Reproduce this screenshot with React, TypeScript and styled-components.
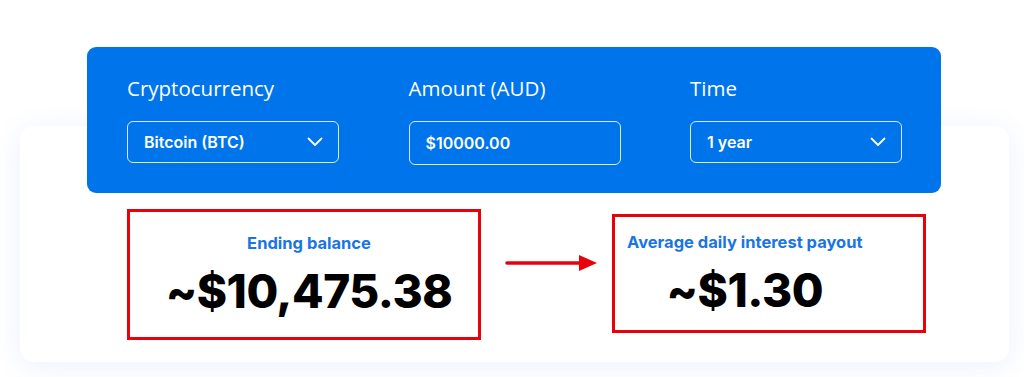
import React from 'react';
import styled, { createGlobalStyle } from 'styled-components';

const GlobalStyle = createGlobalStyle`
  html, body {
    margin: 0;
    padding: 0;
    background: #ffffff;
  }
  body {
    font-family: 'Inter', 'Open Sans', sans-serif;
  }
`;

interface Field {
  label: string;
  value: string;
  select: boolean;
}

const fields: Field[] = [
  { label: 'Cryptocurrency', value: 'Bitcoin (BTC)', select: true },
  { label: 'Amount (AUD)', value: '$10000.00', select: false },
  { label: 'Time', value: '1 year', select: true },
];

const Chevron = () => (
  <svg width="16" height="10" viewBox="0 0 16 10" fill="none">
    <path
      d="M1.5 1.5L8 8L14.5 1.5"
      stroke="#ffffff"
      strokeWidth="1.8"
      strokeLinecap="round"
      strokeLinejoin="round"
    />
  </svg>
);

const Arrow = () => (
  <svg width="92" height="20" viewBox="0 0 92 20">
    <line x1="2" y1="10" x2="76" y2="10" stroke="#e8000b" strokeWidth="3.5" strokeLinecap="round" />
    <path d="M74 2L92 10L74 18Z" fill="#e8000b" />
  </svg>
);

const App: React.FC = () => {
  return (
    <>
      <GlobalStyle />
      <Page>
        <Panel>
          {fields.map((f) => (
            <Column key={f.label}>
              <Label>{f.label}</Label>
              <InputBox select={f.select}>
                <span>{f.value}</span>
                {f.select && <Chevron />}
              </InputBox>
            </Column>
          ))}
        </Panel>
        <Card>
          <ResultBox width={354} height={131} padLeft={10} padTop={21}>
            <ResultInner>
              <ResultLabel>Ending balance</ResultLabel>
              <ResultValue>~$10,475.38</ResultValue>
            </ResultInner>
          </ResultBox>
          <ArrowWrap>
            <Arrow />
          </ArrowWrap>
          <ResultBox width={314} height={119} padLeft={12} padTop={15} left>
            <ResultInner>
              <ResultLabel>Average daily interest payout</ResultLabel>
              <ResultValue>~$1.30</ResultValue>
            </ResultInner>
          </ResultBox>
        </Card>
      </Page>
    </>
  );
};

export default App;

const Page = styled.div`
  width: 1024px;
  height: 377px;
  box-sizing: border-box;
  padding: 47px 15px 0 20px;
  overflow: hidden;
`;

const Panel = styled.div`
  position: relative;
  z-index: 1;
  margin-left: 67px;
  width: 854px;
  height: 146px;
  box-sizing: border-box;
  padding: 28px 39px 0 40px;
  background: #0074ea;
  border-radius: 9px;
  display: grid;
  grid-template-columns: repeat(3, 212px);
  column-gap: 69.5px;
`;

const Column = styled.div`
  display: flex;
  flex-direction: column;
`;

const Label = styled.div`
  color: #ffffff;
  font-family: 'Open Sans', sans-serif;
  font-size: 20.5px;
  line-height: 26px;
  font-weight: 400;
  margin-bottom: 20px;
`;

const InputBox = styled.div<{ select: boolean }>`
  box-sizing: border-box;
  border: 1px solid rgba(255, 255, 255, 0.85);
  border-radius: 6px;
  padding: 0 15px 0 16px;
  display: flex;
  align-items: center;
  justify-content: space-between;
  color: #ffffff;
  font-family: 'Inter', sans-serif;
  font-weight: 600;
  font-size: 16px;
  height: ${({ select }) => (select ? '42px' : '44px')};
`;

const Card = styled.div`
  margin-top: -67px;
  width: 989px;
  height: 236px;
  box-sizing: border-box;
  padding: 83px 0 0 107px;
  background: #ffffff;
  border-radius: 14px;
  box-shadow: 0 4px 30px rgba(40, 100, 220, 0.09);
  display: flex;
  align-items: flex-start;
`;

const ResultBox = styled.div<{
  width: number;
  height: number;
  padLeft: number;
  padTop: number;
  left?: boolean;
}>`
  width: ${({ width }) => width}px;
  height: ${({ height }) => height}px;
  box-sizing: border-box;
  border: 3px solid #e8000b;
  display: flex;
  justify-content: ${({ left }) => (left ? 'flex-start' : 'center')};
  padding-left: ${({ padLeft }) => padLeft}px;
  padding-top: ${({ padTop }) => padTop}px;
  margin-top: ${({ left }) => (left ? '5px' : '0')};
`;

const ResultInner = styled.div`
  display: flex;
  flex-direction: column;
  align-items: center;
`;

const ResultLabel = styled.div`
  color: #1a74e2;
  font-family: 'Inter', sans-serif;
  font-weight: 700;
  font-size: 16.5px;
  line-height: 20px;
`;

const ResultValue = styled.div`
  color: #000000;
  font-family: 'Inter', sans-serif;
  font-weight: 800;
  font-size: 46px;
  line-height: 56px;
  margin-top: 10px;
  letter-spacing: -0.5px;
`;

const ArrowWrap = styled.div`
  margin: 44px 15px 0 24px;
  display: flex;
`;
